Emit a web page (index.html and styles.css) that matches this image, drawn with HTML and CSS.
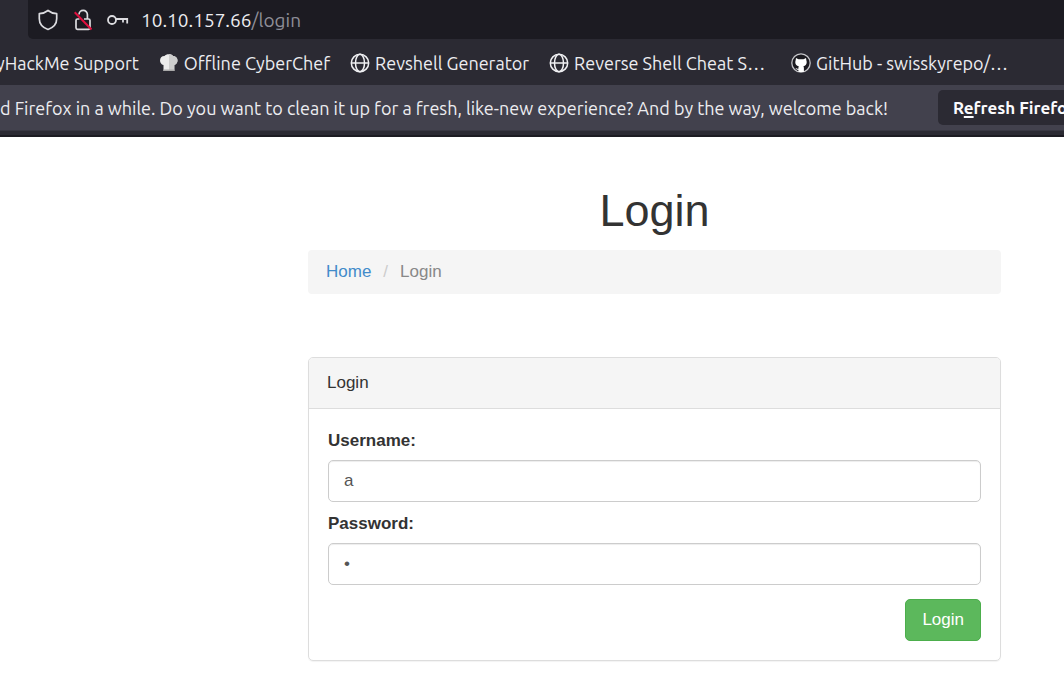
FILE: index.html
```html
<!DOCTYPE html>
<html lang="en">
<head>
<meta charset="utf-8">
<title>Login</title>
<link rel="stylesheet" href="styles.css">
</head>
<body>
<header class="browser">
  <div class="toolbar">
    <div class="urlbar">
      <svg class="shield" viewBox="0 0 20 22" fill="none" stroke="#dcdce0" stroke-width="1.700" stroke-linejoin="round"><path d="M10 1.500C7.500 3.500 4.500 4.600 1.300 4.700v5c0 4.700 3.400 8.800 8.700 10.800 5.300-2 8.700-6.100 8.700-10.800v-5C15.500 4.600 12.500 3.500 10 1.500Z"/></svg>
      <svg class="lock" viewBox="0 0 18 22" fill="none" stroke="#dcdce0" stroke-width="1.700"><path d="M5 5.500a4.200 4.200 0 0 1 8.400 0V10M5.500 10H3.500a1.500 1.500 0 0 0-1.500 1.500v7.300a1.500 1.500 0 0 0 1.500 1.500h11a1.500 1.500 0 0 0 1.500-1.500V11.500a1.500 1.500 0 0 0-1.500-1.500H10"/><path d="M.7 3.200 17.500 20.500" stroke="#e2103f" stroke-width="2"/></svg>
      <svg class="key" viewBox="0 0 22 14" fill="none" stroke="#dcdce0" stroke-width="1.800"><circle cx="5" cy="7" r="4"/><path d="M9 6H20.200V10.500M16 6V9.500"/></svg>
      <span class="address">10.10.157.66<span class="path">/login</span></span>
    </div>
  </div>
  <nav class="bookmarks" aria-label="Bookmarks">
    <a class="first" href="#">yHackMe Support</a>
    <a href="#"><svg class="favicon" viewBox="0 0 20 20"><path d="M4.500 18V12C-.5 10.500 0 3 5.500 3 7 .5 12.500.5 14 3c5.500 0 6 7.500 1.300 9V18Z" fill="#ececec"/><path d="M10 1.100c1.700 0 3.200.7 4 1.900 5.500 0 6 7.500 1.300 9V18H10Z" fill="#cdcdcd"/><path d="M4.500 16.500h10.800V18H4.500Z" fill="#aaa"/></svg>Offline CyberChef</a>
    <a href="#"><svg class="favicon" viewBox="0 0 20 20" fill="none" stroke="#f0f0f3" stroke-width="1.500"><circle cx="10" cy="10" r="8.700"/><ellipse cx="10" cy="10" rx="4.500" ry="8.700"/><path d="M1.500 10h17"/></svg>Revshell Generator</a>
    <a class="truncated" href="#"><svg class="favicon" viewBox="0 0 20 20" fill="none" stroke="#f0f0f3" stroke-width="1.500"><circle cx="10" cy="10" r="8.700"/><ellipse cx="10" cy="10" rx="4.500" ry="8.700"/><path d="M1.500 10h17"/></svg>Reverse Shell Cheat S…</a>
    <a href="#"><svg class="favicon" viewBox="0 0 20 20"><circle cx="10" cy="10" r="9.200" fill="#1b1a20" stroke="#c4c4c8" stroke-width="1.300"/><path d="M5 5 7.500 6.200h5L15 5l.4 2.600c.9 2.900-.4 5.300-3 5.700.4.700.5 1.300.5 2V19H7.400v-2.200c-1.700.1-2.200-.9-2.900-1.900 1.200-.1 1.600 1 2.900.8 0-1 .1-1.700.4-2.400C5 12.900 3.700 10.500 4.600 7.600Z" fill="#fff"/></svg>GitHub - swisskyrepo/…</a>
  </nav>
  <div class="notice">
    <p class="message">d Firefox in a while. Do you want to clean it up for a fresh, like-new experience? And by the way, welcome back!</p>
    <button class="refresh" type="button">R<span class="accesskey">e</span>fresh Firefox…</button>
  </div>
</header>
<main class="container">
  <h1>Login</h1>
  <nav class="breadcrumb" aria-label="Breadcrumb"><a href="#">Home</a><span class="slash">/</span><span class="current">Login</span></nav>
  <section class="panel">
    <div class="panel-heading">Login</div>
    <form class="panel-body">
      <label for="username">Username:</label>
      <input id="username" type="text" value="a">
      <label for="password">Password:</label>
      <input id="password" type="password" value="a">
      <button class="submit" type="submit">Login</button>
    </form>
  </section>
</main>
</body>
</html>
```
FILE: styles.css
```css
* { box-sizing: border-box; }
body {
  margin: 0;
  background: #fff;
  color: #333;
  font-family: "Liberation Sans", Arial, sans-serif;
  font-size: 17px;
  line-height: 24px;
  overflow-x: hidden;
}
.browser {
  background: #2b2a33;
  color: #ededf1;
  font-family: Ubuntu, "Noto Sans", sans-serif;
  font-size: 18px;
  overflow: hidden;
  border-bottom: 2px solid #1c1b22;
}
.toolbar { padding-left: 28px; }
.urlbar {
  display: flex;
  align-items: center;
  height: 39px;
  background: #1c1b22;
  border-radius: 0 0 0 5px;
  padding-left: 10px;
}
.urlbar svg { flex: none; }
.shield { width: 20px; height: 22px; margin-right: 16px; }
.lock { width: 18px; height: 22px; margin-right: 15px; }
.key { width: 22px; height: 14px; margin-right: 12px; }
.address { font-size: 19px; }
.path { color: #8f8f98; }
.bookmarks {
  display: flex;
  align-items: center;
  gap: 20px;
  height: 46px;
  padding-top: 2px;
  white-space: nowrap;
}
.bookmarks a {
  display: flex;
  flex: none;
  align-items: center;
  gap: 5px;
  color: inherit;
  text-decoration: none;
}
.bookmarks .first { margin-left: -4px; }
.bookmarks .truncated { min-width: 222px; }
.favicon { flex: none; width: 20px; height: 20px; }
.notice {
  display: flex;
  align-items: center;
  gap: 50px;
  height: 46px;
  background: #42414d;
  white-space: nowrap;
  border-bottom: 1px solid #383742;
  margin-bottom: 4px;
}
.message { margin: 0; }
.refresh {
  flex: none;
  height: 35px;
  padding: 0 15px;
  border: 0;
  border-radius: 5px;
  background: #2b2a33;
  color: #fbfbfe;
  font: bold 17px Ubuntu, "Noto Sans", sans-serif;
}
.accesskey { text-decoration: underline 2px; text-underline-offset: 2px; }
.container { padding: 47px 63px 16px 308px; }
h1 {
  margin: 0 0 12px;
  font-size: 45px;
  line-height: 54px;
  font-weight: 400;
  text-align: center;
}
.breadcrumb {
  display: flex;
  gap: 12px;
  padding: 10px 18px;
  margin-bottom: 63px;
  background: #f5f5f5;
  border-radius: 4px;
}
.breadcrumb a { color: #428bca; text-decoration: none; }
.slash { color: #ccc; }
.current { color: #888; }
.panel {
  border: 1px solid #ddd;
  border-radius: 5px;
  box-shadow: 0 1px 1px rgba(0, 0, 0, 0.05);
}
.panel-heading {
  padding: 13px 18px;
  background: #f5f5f5;
  border-bottom: 1px solid #ddd;
  border-radius: 4px 4px 0 0;
}
.panel-body {
  display: flex;
  flex-direction: column;
  padding: 20px 19px 19px;
}
label { font-weight: 700; margin-bottom: 7px; }
input {
  width: 100%;
  height: 42px;
  margin-bottom: 10px;
  padding: 0 15px;
  border: 1px solid #ccc;
  border-radius: 5px;
  background: #fff;
  box-shadow: inset 0 1px 1px rgba(0, 0, 0, 0.075);
  color: #555;
  font: inherit;
}
.submit {
  align-self: flex-end;
  height: 42px;
  margin-top: 4px;
  padding: 0 16px;
  border: 1px solid #4cae4c;
  border-radius: 5px;
  background: #5cb85c;
  color: #fff;
  font: inherit;
}
```
